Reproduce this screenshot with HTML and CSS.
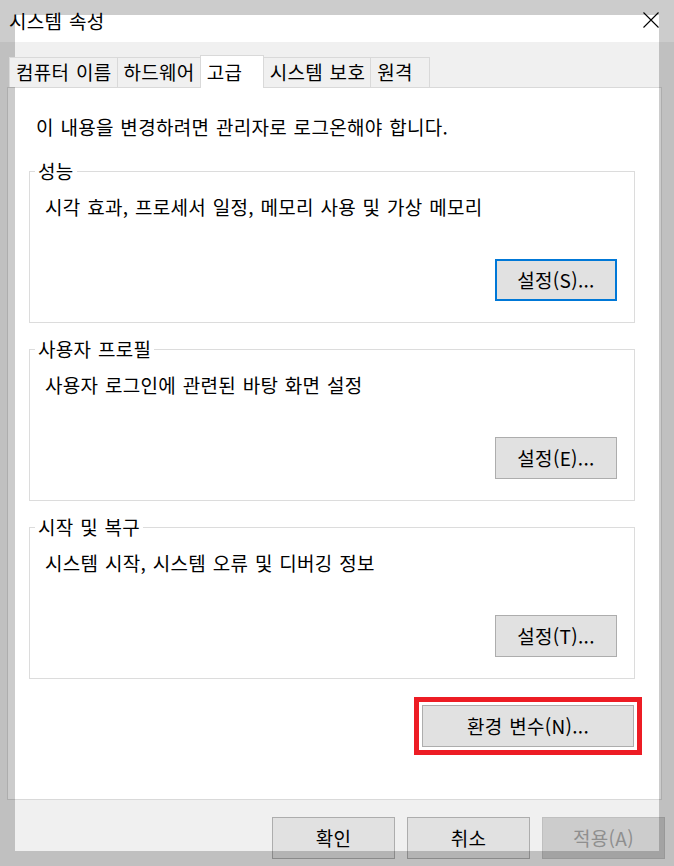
FILE: index.html
```html
<!DOCTYPE html>
<html lang="ko">
<head>
<meta charset="utf-8">
<title>시스템 속성</title>
<link rel="stylesheet" href="styles.css">
</head>
<body>
<div class="window">
  <div class="titlebar">
    <span class="title">시스템 속성</span>
    <svg class="close" width="16" height="16" viewBox="0 0 16 16" aria-label="닫기">
      <path d="M0.5 0.5 L15.5 15.5 M15.5 0.5 L0.5 15.5" stroke="#000" stroke-width="1.1" fill="none"/>
    </svg>
  </div>
  <div class="content">
    <div class="tabs">
      <div class="tab">컴퓨터 이름</div>
      <div class="tab">하드웨어</div>
      <div class="tab active">고급</div>
      <div class="tab">시스템 보호</div>
      <div class="tab">원격</div>
    </div>
    <div class="panel">
      <p class="note">이 내용을 변경하려면 관리자로 로그온해야 합니다.</p>
      <div class="group">
        <span class="legend">성능</span>
        <p class="desc">시각 효과, 프로세서 일정, 메모리 사용 및 가상 메모리</p>
        <div class="group-actions"><button class="btn focused">설정(S)...</button></div>
      </div>
      <div class="group">
        <span class="legend">사용자 프로필</span>
        <p class="desc">사용자 로그인에 관련된 바탕 화면 설정</p>
        <div class="group-actions"><button class="btn">설정(E)...</button></div>
      </div>
      <div class="group">
        <span class="legend">시작 및 복구</span>
        <p class="desc">시스템 시작, 시스템 오류 및 디버깅 정보</p>
        <div class="group-actions"><button class="btn">설정(T)...</button></div>
      </div>
      <div class="env-row">
        <button class="btn env highlight">환경 변수(N)...</button>
      </div>
    </div>
    <div class="actions">
      <button class="btn wide">확인</button>
      <button class="btn wide">취소</button>
      <button class="btn wide" disabled>적용(A)</button>
    </div>
  </div>
  <div class="mask"></div>
</div>
</body>
</html>
```
FILE: styles.css
```css
* { box-sizing: border-box; }

html, body {
  margin: 0;
  padding: 0;
}

body {
  width: 674px;
  height: 866px;
  overflow: hidden;
  background: #f0f0f0;
  color: #000;
  font-family: "Noto Sans CJK KR", "Noto Sans", sans-serif;
  font-size: 19px;
  line-height: 24px;
  letter-spacing: 0.3px;
  word-spacing: 1px;
}

.window {
  position: relative;
  width: 674px;
  height: 866px;
}

.titlebar {
  height: 42px;
  background: #fff;
  display: flex;
  align-items: center;
  justify-content: space-between;
  padding: 0 15px 0 9px;
}

.close {
  display: block;
  margin-bottom: 3px;
}

.content {
  padding: 13px 12px 0 7px;
}

.tabs {
  position: relative;
  z-index: 1;
  display: flex;
  align-items: flex-end;
  height: 32px;
  padding-left: 2px;
}

.tab {
  height: 30px;
  line-height: 28px;
  min-width: 60px;
  padding: 0 5px 0 6px;
  background: #f0f0f0;
  border: 1px solid #d9d9d9;
  border-bottom: none;
  margin-right: -1px;
  white-space: nowrap;
}

.tab.active {
  height: 33px;
  line-height: 31px;
  min-width: 64px;
  margin-bottom: -1px;
  background: #fff;
  position: relative;
  z-index: 2;
}

.panel {
  background: #fff;
  border: 1px solid #d9d9d9;
  padding: 27px 26px 52px 21px;
}

.note {
  margin: 0 0 32px 7px;
}

.group {
  position: relative;
  border: 1px solid #dcdcdc;
  padding: 23px 17px 21px 15px;
  margin-bottom: 26px;
}

.group:last-of-type {
  margin-bottom: 0;
}

.legend {
  position: absolute;
  top: -13px;
  left: 5px;
  padding: 0 3px;
  background: #fff;
}

.desc {
  margin: 0;
}

.group-actions {
  display: flex;
  justify-content: flex-end;
  margin-top: 40px;
}

.btn {
  font: inherit;
  letter-spacing: inherit;
  word-spacing: inherit;
  color: #000;
  height: 42px;
  width: 122px;
  padding: 0;
  background: #e1e1e1;
  border: 1px solid #adadad;
  border-radius: 0;
  text-align: center;
}

.btn.focused {
  border: 2px solid #0078d7;
}

.env-row {
  display: flex;
  justify-content: flex-end;
  margin-top: 24px;
}

.btn.env {
  width: 212px;
  margin-right: 1px;
}

.highlight {
  outline: 5px solid #ed1c24;
  outline-offset: 3px;
}

.actions {
  display: flex;
  justify-content: flex-end;
  gap: 12px;
  margin-top: 17px;
  margin-right: -3px;
}

.btn.wide {
  width: 123px;
}

.btn[disabled] {
  background: #cccccc;
  border-color: #bfbfbf;
  color: #8f8f8f;
}

.mask {
  position: absolute;
  left: 15px;
  top: 15px;
  width: 644px;
  height: 836px;
  box-shadow: 0 0 0 800px rgba(0, 0, 0, 0.2);
  pointer-events: none;
}
```
